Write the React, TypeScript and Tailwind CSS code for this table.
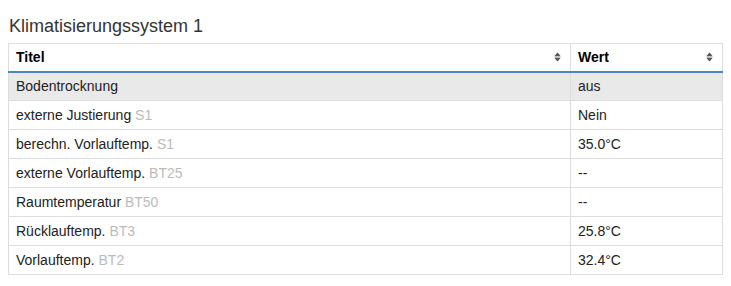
import React from 'react';

type Row = { title: string; tag?: string; value: string; active?: boolean };

const rows: Row[] = [
  { title: 'Bodentrocknung', value: 'aus', active: true },
  { title: 'externe Justierung', tag: 'S1', value: 'Nein' },
  { title: 'berechn. Vorlauftemp.', tag: 'S1', value: '35.0°C' },
  { title: 'externe Vorlauftemp.', tag: 'BT25', value: '--' },
  { title: 'Raumtemperatur', tag: 'BT50', value: '--' },
  { title: 'Rücklauftemp.', tag: 'BT3', value: '25.8°C' },
  { title: 'Vorlauftemp.', tag: 'BT2', value: '32.4°C' },
];

const SortIcon = () => (
  <svg width="7" height="10" viewBox="0 0 7 10" className="shrink-0">
    <path d="M3.5 0.5 L6.5 4 L0.5 4 Z" fill="#555" />
    <path d="M3.5 9.5 L6.5 6 L0.5 6 Z" fill="#555" />
    <rect x="0.5" y="4.4" width="6" height="1.2" fill="#999" />
  </svg>
);

export default function App() {
  return (
    <div className="w-[731px] h-[286px] bg-white pl-2 pt-4 font-['Liberation_Sans',Arial,sans-serif] text-[#222]">
      <h4 className="ml-px text-[18px] leading-5 text-[#333] mb-[7px]">Klimatisierungssystem 1</h4>
      <table className="w-[715px] border border-[#ddd] border-collapse text-[14px] leading-5">
        <thead>
          <tr className="border-b-2 border-b-[#4a86c5]">
            <th className="w-[562px] h-[28px] pl-[7px] pr-2 py-0 text-left font-bold text-black border-r border-[#ddd]">
              <div className="flex items-center justify-between pr-[1px]">
                <span>Titel</span>
                <SortIcon />
              </div>
            </th>
            <th className="h-[28px] pl-[7px] pr-2 py-0 text-left font-bold text-black">
              <div className="flex items-center justify-between pr-[1px]">
                <span>Wert</span>
                <SortIcon />
              </div>
            </th>
          </tr>
        </thead>
        <tbody>
          {rows.map((r) => (
            <tr key={r.title} className={`border-t border-[#ddd] ${r.active ? 'bg-[#e9e9e9]' : 'bg-white'}`}>
              <td className="h-[29px] pl-[7px] pr-2 py-0 border-r border-[#ddd]">
                {r.title}
                {r.tag && <span className="text-[#bbb]"> {r.tag}</span>}
              </td>
              <td className="h-[29px] pl-[7px] pr-2 py-0">{r.value}</td>
            </tr>
          ))}
        </tbody>
      </table>
    </div>
  );
}
